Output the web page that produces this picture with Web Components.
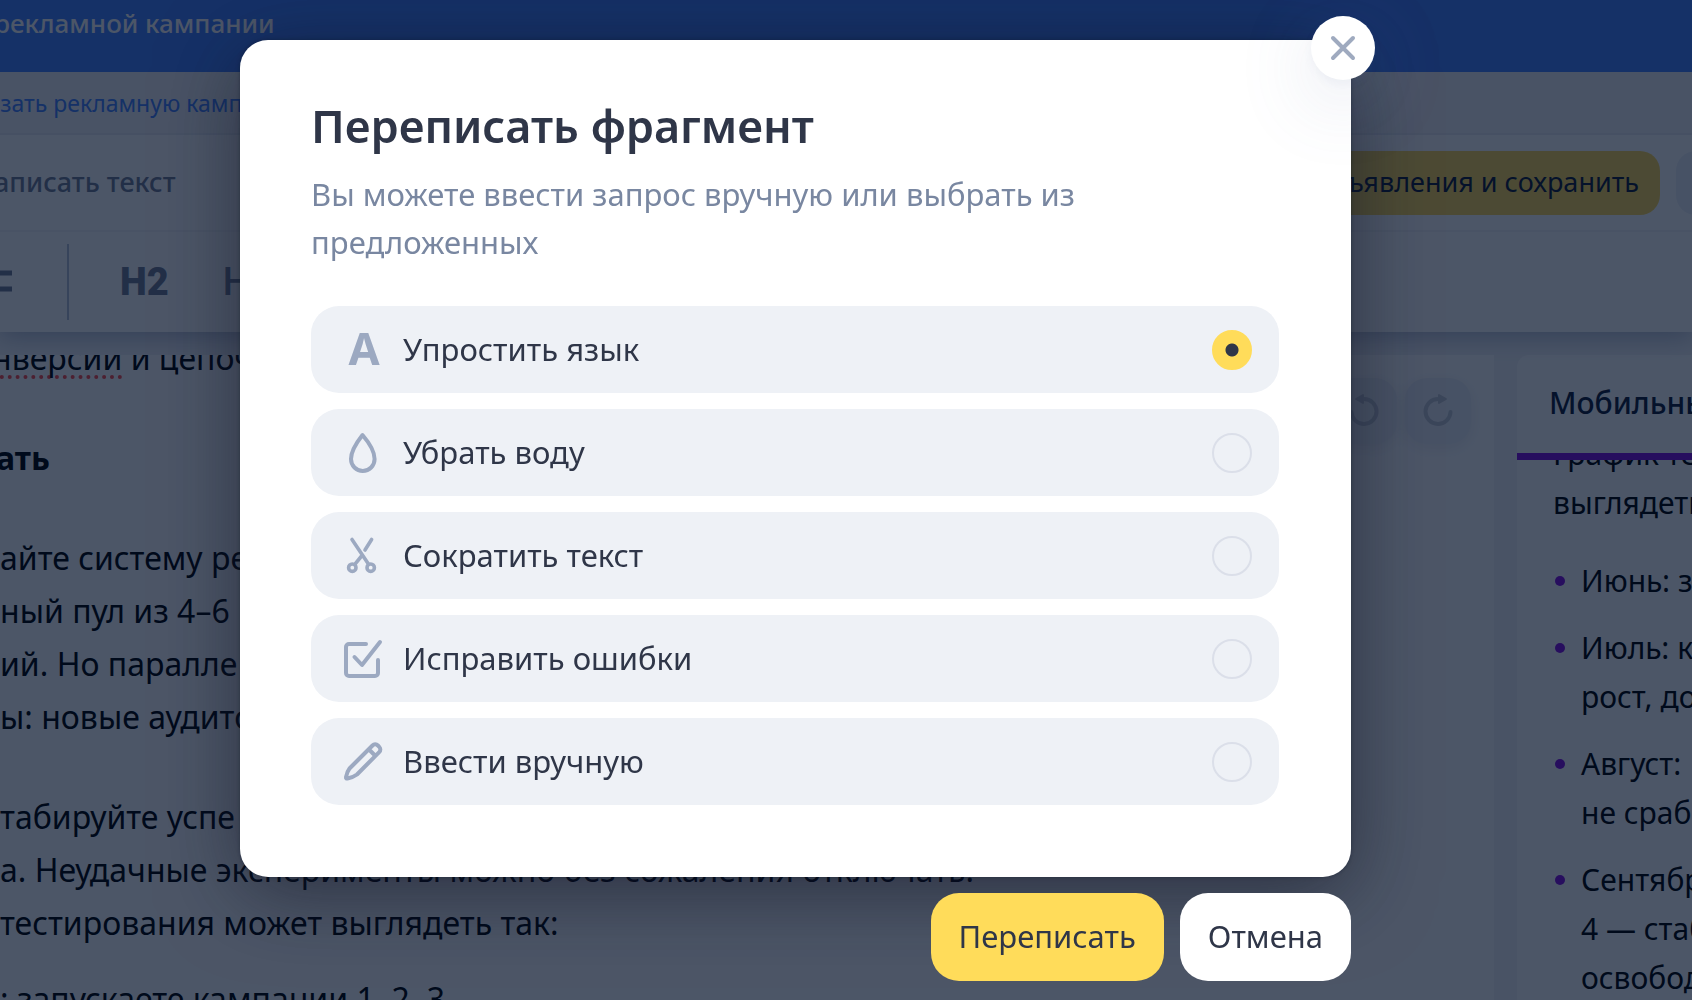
<!DOCTYPE html>
<html lang="ru">
<head>
<meta charset="utf-8">
<title>Переписать фрагмент</title>
<style>
    html, body {
        height: 100%;
        margin: 0;
    }
    body {
        --ink: #2f3648;
        --muted: #7987a1;
        --icon: #9ca9c1;
        --brand: #4682fd;
        --accent: #ffdc5a;
        --violet: #8210e0;
        --row: #eef1f6;
        --tool: #747d93;
        overflow: hidden;
        color: #000;
        font-family: "Noto Sans", "Open Sans", sans-serif;
    }
</style>
</head>
<body>
<editor-page></editor-page>
<modal-layer>
    <rewrite-dialog></rewrite-dialog>
    <round-button slot="actions" kind="primary">Переписать</round-button>
    <round-button slot="actions">Отмена</round-button>
</modal-layer>

<script>
// Small helper: every element below is a style + markup string in an open root.
function makeRoot(el, html) {
    const template = document.createElement('template');
    template.innerHTML = html;
    const root = el.attachShadow({ mode: 'open' });
    root.appendChild(template.content.cloneNode(true));
    return root;
}

const ICONS = {
    letter: '<text x="21" y="35" text-anchor="middle" font-size="45" font-weight="700" fill="currentColor" stroke="none">A</text>',
    drop: '<path d="M19.5 2C14 9 8 18 8 26a11.8 12 0 0 0 23.6 0C31.6 18 25.5 9 19.5 2Z"/>',
    scissors: '<g stroke-width="3.6"><path d="M9 3.5 25.6 28.2M28.6 3.5 22 14M19.4 19 12 28.2"/><circle cx="9.3" cy="31.7" r="3.7"/><circle cx="27.7" cy="31.7" r="3.7"/></g>',
    check: '<path d="M23 5H6a3 3 0 0 0-3 3v26a3 3 0 0 0 3 3h26a3 3 0 0 0 3-3V21"/><path d="M11.5 18 19 26 37 3"/>',
    pencil: '<path d="M6.5 26.5 29.5 3.5a3.8 3.8 0 0 1 5.4 0l1.3 1.3a3.8 3.8 0 0 1 0 5.4L14 32.5c-3 2.3-6 3.2-9.6 4-1 .2-1.6-.4-1.4-1.4.6-3.2 1.5-6 3.5-8.6ZM26 7.5l6 6"/>',
    close: '<path d="m10 10 20 20M30 10 10 30"/>',
    redo: '<g stroke-width="4"><path d="M20 8a12.5 12.5 0 1 0 12.5 13"/><path d="M21 4v8l7-4Z" stroke-width="2" fill="currentColor"/></g>',
    undo: '<g stroke-width="4" transform="matrix(-1 0 0 1 40 0)"><path d="M20 8a12.5 12.5 0 1 0 12.5 13"/><path d="M21 4v8l7-4Z" stroke-width="2" fill="currentColor"/></g>',
    list: '<path d="M0 11h40M0 27h40" stroke-width="5" stroke-linecap="butt"/>'
};

class LineIcon extends HTMLElement {
    constructor() {
        super();
        this._root = makeRoot(this, `
            <style>
                :host { display: block; width: 40px; height: 40px; flex: none; }
                svg { display: block; width: 100%; height: 100%; overflow: visible; }
            </style>
            <svg viewBox="0 0 40 40" fill="none" stroke="currentColor" stroke-width="4"
                 stroke-linecap="round" stroke-linejoin="round" aria-hidden="true"></svg>
        `);
    }

    connectedCallback() {
        this._root.querySelector('svg').innerHTML = ICONS[this.getAttribute('name')] || '';
    }
}

class RoundButton extends HTMLElement {
    constructor() {
        super();
        makeRoot(this, `
            <style>
                :host { display: block; }
                button {
                    height: 88px;
                    padding: 0 28px 2px;
                    border: 0;
                    border-radius: 28px;
                    background: #fff;
                    color: var(--ink);
                    font: inherit;
                    font-size: 31px;
                    line-height: 42px;
                    cursor: pointer;
                }
                :host([kind="primary"]) button { background: var(--accent); }
            </style>
            <button type="button"><slot></slot></button>
        `);
    }
}

class OptionList extends HTMLElement {
    constructor() {
        super();
        const options = [
            ['letter', 'Упростить язык'],
            ['drop', 'Убрать воду'],
            ['scissors', 'Сократить текст'],
            ['check', 'Исправить ошибки'],
            ['pencil', 'Ввести вручную']
        ];
        makeRoot(this, `
            <style>
                :host { display: grid; gap: 16px; }
                label {
                    display: flex;
                    align-items: center;
                    gap: 20px;
                    height: 87px;
                    padding: 0 27px 0 32px;
                    box-sizing: border-box;
                    border-radius: 28px;
                    background: var(--row);
                    color: var(--ink);
                    font-size: 31px;
                    line-height: 42px;
                    cursor: pointer;
                }
                line-icon { color: var(--icon); }
                span { flex: 1; padding-bottom: 2px; }
                input {
                    appearance: none;
                    width: 40px;
                    height: 40px;
                    margin: 0;
                    border: 2px solid #dbdfe9;
                    border-radius: 50%;
                }
                input:checked {
                    border-color: var(--accent);
                    background: radial-gradient(circle, var(--ink) 6px, var(--accent) 7px);
                }
            </style>
            ${options.map(([icon, text], i) => `
                <label>
                    <line-icon name="${icon}"></line-icon>
                    <span>${text}</span>
                    <input type="radio" name="mode" value="${icon}"${i === 0 ? ' checked' : ''}>
                </label>`).join('')}
        `);
    }
}

class RewriteDialog extends HTMLElement {
    constructor() {
        super();
        makeRoot(this, `
            <style>
                :host {
                    display: block;
                    position: relative;
                    padding: 55px 72px 72px 71px;
                    border-radius: 28px;
                    background: #fff;
                    box-shadow: 0 16px 80px rgba(16, 20, 36, .55), 0 0 4px rgba(16, 20, 36, .4);
                }
                h1 {
                    margin: 0;
                    color: var(--ink);
                    font-size: 45px;
                    font-weight: 600;
                    line-height: 62px;
                }
                p {
                    margin: 13px 0 40px;
                    color: var(--muted);
                    font-size: 31px;
                    line-height: 48px;
                }
                .close {
                    position: absolute;
                    top: -24px;
                    right: -24px;
                    display: grid;
                    place-items: center;
                    width: 64px;
                    height: 64px;
                    padding: 0;
                    border: 0;
                    border-radius: 50%;
                    background: #fff;
                    color: #9faabf;
                    box-shadow: 0 20px 80px rgba(90, 110, 160, .2), 0 4px 10px rgba(90, 110, 160, .06);
                    cursor: pointer;
                }
            </style>
            <section role="dialog" aria-labelledby="title">
                <h1 id="title">Переписать фрагмент</h1>
                <p>Вы можете ввести запрос вручную или выбрать из предложенных</p>
                <option-list></option-list>
            </section>
            <button class="close" type="button" aria-label="Закрыть"><line-icon name="close"></line-icon></button>
        `);
    }
}

class ModalLayer extends HTMLElement {
    constructor() {
        super();
        makeRoot(this, `
            <style>
                :host {
                    position: fixed;
                    inset: 0;
                    display: flex;
                    flex-direction: column;
                    gap: 16px;
                    padding: 40px 341px 16px 240px;
                    background: rgba(0, 14, 38, .7);
                }
                footer {
                    display: flex;
                    justify-content: flex-end;
                    gap: 16px;
                    position: relative;
                }
            </style>
            <slot></slot>
            <footer><slot name="actions"></slot></footer>
        `);
    }
}

class FormatToolbar extends HTMLElement {
    constructor() {
        super();
        makeRoot(this, `
            <style>
                :host {
                    display: flex;
                    align-items: center;
                    height: 100px;
                    box-sizing: border-box;
                    background: #fff;
                    color: var(--tool);
                    box-shadow: 0 4px 24px rgba(60, 80, 130, .4);
                    clip-path: inset(0 0 -40px 0);
                    position: relative;
                }
                button {
                    padding: 0;
                    border: 0;
                    background: none;
                    color: inherit;
                    font: 900 38px Roboto, sans-serif;
                }
                .list { margin-left: -28px; }
                hr {
                    width: 2px;
                    height: 76px;
                    margin: 0 51px 0 55px;
                    border: 0;
                    background: #b9c3d6;
                }
                .h3 { margin-left: 54px; font-weight: 500; }
            </style>
            <button class="list" type="button" aria-label="Список"><line-icon name="list"></line-icon></button>
            <hr>
            <button type="button">H2</button>
            <button class="h3" type="button">H3</button>
        `);
    }
}

class TextEditor extends HTMLElement {
    constructor() {
        super();
        makeRoot(this, `
            <style>
                :host {
                    display: block;
                    position: relative;
                    overflow: hidden;
                    background: #fff;
                    font-size: 32px;
                    line-height: 53px;
                    white-space: nowrap;
                }
                /* scrolled a little past the first line */
                article { margin-top: -24px; }
                h2, p { margin: 0 0 47px; font-size: inherit; }
                h2 { font-weight: 700; text-indent: -4px; }
                p.first { text-indent: -8px; }
                p.lead { margin-bottom: 23px; }
                .typo {
                    text-decoration: underline dotted #ff4a4a 4px;
                    text-underline-offset: 5px;
                    text-decoration-skip-ink: none;
                }
                nav {
                    position: absolute;
                    top: 23px;
                    right: 23px;
                    display: flex;
                    gap: 8px;
                }
                button {
                    display: grid;
                    place-items: center;
                    width: 66px;
                    height: 66px;
                    border: 0;
                    border-radius: 22px;
                    background: #eef1f7;
                    color: #c4c9d4;
                    box-shadow: 0 4px 16px rgba(60, 80, 130, .1);
                }
            </style>
            <article>
                <p class="first"><span class="typo">нверсии</span> и цепоч</p>
                <h2>ать</h2>
                <p>айте систему ре<br>ный пул из 4–6<br>ий. Но паралле<br>ы: новые аудито</p>
                <p class="lead">табируйте успе<br>а. Неудачные эксперименты можно без сожаления отключать.<br>тестирования может выглядеть так:</p>
                <p>: запускаете кампании 1, 2, 3</p>
            </article>
            <nav>
                <button type="button" aria-label="Отменить"><line-icon name="undo"></line-icon></button>
                <button type="button" aria-label="Повторить"><line-icon name="redo"></line-icon></button>
            </nav>
        `);
    }
}

class MobilePreview extends HTMLElement {
    constructor() {
        super();
        makeRoot(this, `
            <style>
                :host {
                    display: block;
                    overflow: hidden;
                    border-top-left-radius: 12px;
                    background: #fff;
                    font-size: 30px;
                    line-height: 49px;
                    white-space: nowrap;
                }
                h2 {
                    margin: 0;
                    padding: 0 0 2px 32px;
                    border-bottom: 7px solid var(--violet);
                    color: #121c38;
                    font-size: 30px;
                    font-weight: 500;
                    line-height: 96px;
                }
                .body { overflow: hidden; padding-left: 36px; }
                p { margin: -31px 0 29px; }
                ul {
                    display: grid;
                    gap: 18px;
                    margin: 0;
                    padding: 0 0 0 2px;
                    list-style: none;
                }
                li { display: flex; gap: 16px; }
                li::before {
                    content: "";
                    width: 10px;
                    height: 10px;
                    margin-top: 20px;
                    border-radius: 50%;
                    background: var(--violet);
                }
            </style>
            <h2>Мобильны</h2>
            <div class="body">
                <p>График те<br>выглядеть</p>
                <ul>
                    <li><span>Июнь: з</span></li>
                    <li><span>Июль: к<br>рост, до</span></li>
                    <li><span>Август:<br>не сраб</span></li>
                    <li><span>Сентябр<br>4 — стаб<br>освобод</span></li>
                </ul>
            </div>
        `);
    }
}

class EditorPage extends HTMLElement {
    constructor() {
        super();
        makeRoot(this, `
            <style>
                :host {
                    display: flex;
                    flex-direction: column;
                    height: 100vh;
                    overflow: hidden;
                    background: #f4f5f8;
                    white-space: nowrap;
                }
                header {
                    height: 72px;
                    background: var(--brand);
                    color: #fff;
                    font-size: 26px;
                    font-weight: 500;
                    line-height: 46px;
                    text-indent: -6px;
                }
                .crumbs {
                    height: 63px;
                    border-bottom: 2px solid #e9ecf2;
                    box-sizing: border-box;
                    line-height: 62px;
                    font-size: 23px;
                    text-indent: -14px;
                }
                a { color: var(--brand); text-decoration: none; }
                .actions {
                    display: flex;
                    align-items: center;
                    justify-content: space-between;
                    height: 97px;
                    box-sizing: border-box;
                    border-bottom: 2px solid #f4f5f8;
                    background: #fff;
                }
                .actions div { display: flex; gap: 16px; }
                button {
                    height: 64px;
                    border: 0;
                    padding: 0 21px 2px;
                    border-radius: 20px;
                    font: inherit;
                    font-size: 27px;
                    color: #121c38;
                }
                .ghost { padding: 0 0 2px; background: none; color: var(--tool); font-weight: 500; text-indent: -6px; }
                .save { background: #ffd855; }
                .more { width: 64px; margin-right: -48px; background: #eef1f7; }
                main {
                    flex: 1;
                    display: grid;
                    grid-template-columns: 1fr 175px;
                    gap: 23px;
                    min-height: 0;
                    padding-top: 23px;
                }
            </style>
            <header>рекламной кампании</header>
            <div class="crumbs"><a href="#">изать рекламную камп</a></div>
            <div class="actions">
                <button class="ghost" type="button">аписать текст</button>
                <div>
                    <button class="save" type="button">объявления и сохранить</button>
                    <button class="more" type="button" aria-label="Ещё"></button>
                </div>
            </div>
            <format-toolbar></format-toolbar>
            <main>
                <text-editor></text-editor>
                <mobile-preview></mobile-preview>
            </main>
        `);
    }
}

customElements.define('line-icon', LineIcon);
customElements.define('round-button', RoundButton);
customElements.define('option-list', OptionList);
customElements.define('rewrite-dialog', RewriteDialog);
customElements.define('modal-layer', ModalLayer);
customElements.define('format-toolbar', FormatToolbar);
customElements.define('text-editor', TextEditor);
customElements.define('mobile-preview', MobilePreview);
customElements.define('editor-page', EditorPage);
</script>
</body>
</html>
